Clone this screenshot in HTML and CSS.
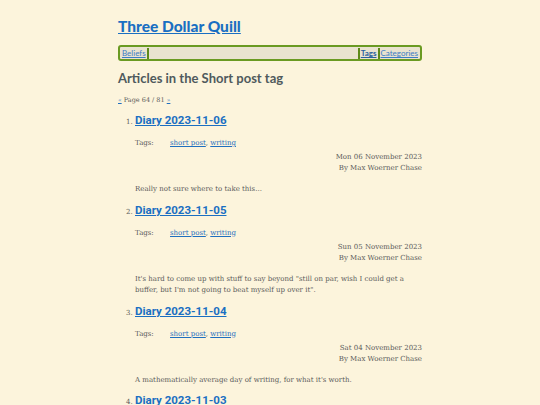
FILE: index.html
```html
<!DOCTYPE html>
<html>
<head>
<meta charset="utf-8">
<link rel="stylesheet" href="styles.css">
</head>
<body>
<div class="page">
  <h1 class="site-title"><a href="#">Three Dollar Quill</a></h1>
  <nav class="nav">
    <a href="#" class="nav-link">Beliefs</a>
    <span class="nav-sep"></span>
    <span class="nav-fill"></span>
    <span class="nav-sep"></span>
    <a href="#" class="nav-link nav-current">Tags</a>
    <span class="nav-sep"></span>
    <a href="#" class="nav-link">Categories</a>
  </nav>
  <h2 class="tag-heading">Articles in the Short post tag</h2>
  <p class="pager"><a href="#" class="pager-arrow">«</a> Page 64 / 81 <a href="#" class="pager-arrow">»</a></p>
  <ol class="articles">
    <li class="article">
      <h3 class="article-title"><a href="#">Diary 2023-11-06</a></h3>
      <div class="tags"><span class="tags-label">Tags:</span><span><a href="#">short post</a>, <a href="#">writing</a></span></div>
      <div class="meta">Mon 06 November 2023<br>By Max Woerner Chase</div>
      <p class="summary">Really not sure where to take this...</p>
    </li>
    <li class="article">
      <h3 class="article-title"><a href="#">Diary 2023-11-05</a></h3>
      <div class="tags"><span class="tags-label">Tags:</span><span><a href="#">short post</a>, <a href="#">writing</a></span></div>
      <div class="meta">Sun 05 November 2023<br>By Max Woerner Chase</div>
      <p class="summary">It's hard to come up with stuff to say beyond "still on par, wish I could get a buffer, but I'm not going to beat myself up over it".</p>
    </li>
    <li class="article">
      <h3 class="article-title"><a href="#">Diary 2023-11-04</a></h3>
      <div class="tags"><span class="tags-label">Tags:</span><span><a href="#">short post</a>, <a href="#">writing</a></span></div>
      <div class="meta">Sat 04 November 2023<br>By Max Woerner Chase</div>
      <p class="summary">A mathematically average day of writing, for what it's worth.</p>
    </li>
    <li class="article">
      <h3 class="article-title"><a href="#">Diary 2023-11-03</a></h3>
    </li>
  </ol>
</div>
</body>
</html>
```
FILE: styles.css
```css
html, body {
  margin: 0;
  padding: 0;
  background: #fcf4dc;
}
body {
  font-family: "DejaVu Serif", serif;
  color: #5a5a5a;
  font-size: 7px;
  overflow: hidden;
  height: 405px;
}
a { color: #1f6fbf; }
.page {
  width: 304px;
  margin: 0 auto;
}
.site-title {
  font-family: Lato, sans-serif;
  font-weight: 900;
  font-size: 15.5px;
  line-height: 20px;
  margin: 16px 0 9px 0;
}
.site-title a { color: #1a6fc2; }
.nav {
  display: flex;
  align-items: center;
  border: 2px solid #6a9a22;
  border-radius: 3px;
  background: #e9e3cf;
  height: 12px;
  padding: 0 2px;
  font-family: Lato, sans-serif;
  font-size: 8px;
}
.nav-link { color: #3c7cc4; }
.nav-current { font-weight: 700; color: #2a5f9e; }
.nav-sep {
  width: 2px;
  height: 11px;
  background: #5d8a1a;
  margin: 0 1px;
}
.nav-fill { flex: 1; }
.tag-heading {
  font-family: Lato, sans-serif;
  font-weight: 700;
  font-size: 13px;
  color: #4f5a5c;
  margin: 9px 0 0 0;
  line-height: 16px;
}
.pager {
  margin: 9px 0 0 0;
  font-size: 6.5px;
  line-height: 10px;
}
.pager-arrow { font-size: 6px; }
.articles {
  margin: 7px 0 0 0;
  padding-left: 17px;
}
.article { margin: 0; }
.article::marker { font-size: 7px; }
.article-title {
  font-family: Roboto, sans-serif;
  font-weight: 700;
  font-size: 11.5px;
  line-height: 16px;
  margin: 0;
}
.article-title a { color: #1a6fc2; }
.tags {
  display: flex;
  margin-top: 10px;
  line-height: 10px;
}
.tags-label { width: 35px; }
.meta {
  text-align: right;
  line-height: 11px;
  margin-top: 4px;
}
.summary {
  margin: 10px 0 6px 0;
  line-height: 11.5px;
}
```
